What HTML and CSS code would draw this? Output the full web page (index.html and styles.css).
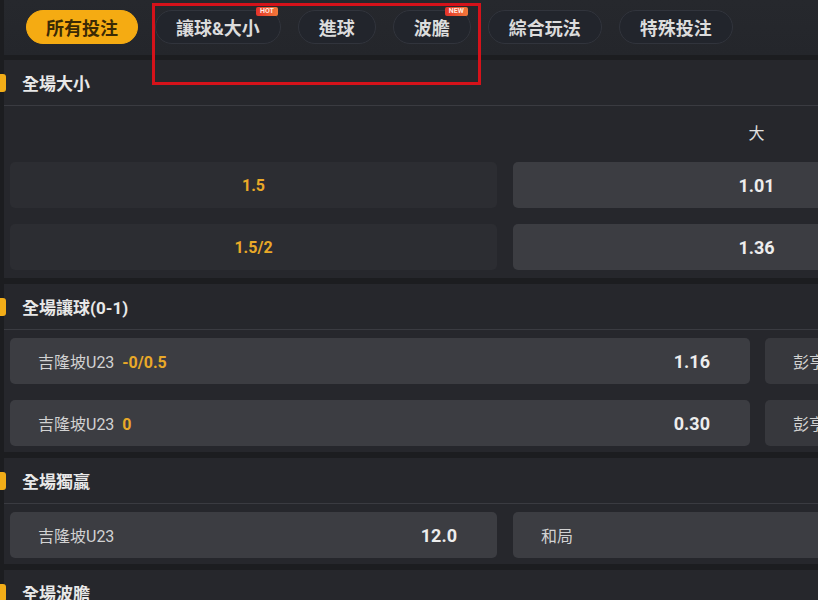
FILE: index.html
```html
<!DOCTYPE html>
<html lang="zh-Hant">
<head>
<meta charset="utf-8">
<title>投注</title>
<link rel="stylesheet" href="styles.css">
</head>
<body>
<div class="page">
  <nav class="tabbar">
    <span class="tab tab-active">所有投注</span>
    <span class="tab">讓球&amp;大小<span class="badge">HOT</span></span>
    <span class="tab">進球</span>
    <span class="tab">波膽<span class="badge">NEW</span></span>
    <span class="tab">綜合玩法</span>
    <span class="tab">特殊投注</span>
  </nav>

  <section class="market">
    <header class="market-head">全場大小</header>
    <div class="market-body market-body-ou">
      <div class="grid2 label-row">
        <span></span>
        <span class="col-label">大</span>
      </div>
      <div class="grid2">
        <div class="cell cell-line"><span class="hl">1.5</span></div>
        <div class="cell cell-odd center"><span class="odd">1.01</span></div>
      </div>
      <div class="grid2">
        <div class="cell cell-line"><span class="hl">1.5/2</span></div>
        <div class="cell cell-odd center"><span class="odd">1.36</span></div>
      </div>
    </div>
  </section>

  <section class="market">
    <header class="market-head">全場讓球(0-1)</header>
    <div class="market-body">
      <div class="grid-hc">
        <div class="cell cell-odd split"><span class="team">吉隆坡U23&nbsp; <span class="hl">-0/0.5</span></span><span class="odd">1.16</span></div>
        <div class="cell cell-odd2 split"><span class="team">彭亨</span></div>
      </div>
      <div class="grid-hc">
        <div class="cell cell-odd split"><span class="team">吉隆坡U23&nbsp; <span class="hl">0</span></span><span class="odd">0.30</span></div>
        <div class="cell cell-odd2 split"><span class="team">彭亨</span></div>
      </div>
    </div>
  </section>

  <section class="market">
    <header class="market-head">全場獨贏</header>
    <div class="market-body">
      <div class="grid2">
        <div class="cell cell-odd split"><span class="team">吉隆坡U23</span><span class="odd">12.0</span></div>
        <div class="cell cell-odd split"><span class="team">和局</span></div>
      </div>
    </div>
  </section>

  <section class="market">
    <header class="market-head">全場波膽</header>
  </section>
</div>
<div class="annot"></div>
</body>
</html>
```
FILE: styles.css
```css
html, body {
  margin: 0;
  padding: 0;
  overflow: hidden;
  background: #1c1d20;
  font-family: "Roboto", "Noto Sans CJK TC", sans-serif;
  color: #e6e6e6;
}

.page {
  width: 1000px;
  padding-left: 4px;
  display: flex;
  flex-direction: column;
  gap: 6px;
}

.tabbar {
  height: 55px;
  box-sizing: border-box;
  background: linear-gradient(#26282d, #24262b);
  display: flex;
  align-items: flex-start;
  gap: 17px;
  padding: 10px 0 0 22px;
  margin-bottom: -1px;
}

.tab {
  position: relative;
  height: 34px;
  box-sizing: border-box;
  padding: 0 20px;
  border-radius: 17px;
  background: #22252c;
  border: 1px solid #31343c;
  display: flex;
  align-items: center;
  font-size: 18px;
  font-weight: 700;
  color: #dcdcdc;
  white-space: nowrap;
}

.tab-active {
  padding: 0 19px;
  background: #f5ab12;
  border-color: #f5ab12;
  color: #3b2a05;
}

.badge {
  position: absolute;
  top: -4px;
  right: 2px;
  height: 9px;
  padding: 0 4px;
  border-radius: 2px;
  background: linear-gradient(90deg, #e5322a, #f27a3a);
  color: #ffe9e0;
  font-size: 7px;
  line-height: 9px;
  font-weight: 700;
}

.market {
  background: #26272c;
  position: relative;
}

.market-head {
  height: 45px;
  border-bottom: 1px solid #3a3b41;
  display: flex;
  align-items: center;
  padding-left: 18px;
  font-size: 17px;
  font-weight: 700;
  color: #e8e8e8;
  position: relative;
}

.market-head::before {
  content: "";
  position: absolute;
  left: -4px;
  top: 50%;
  width: 6px;
  height: 18px;
  margin-top: -9px;
  border-radius: 0 3px 3px 0;
  background: #f2ad18;
}

.market-body {
  padding: 8px 0 6px 6px;
  display: flex;
  flex-direction: column;
  gap: 16px;
}

.market-body-ou {
  padding-bottom: 8px;
}

.grid2 {
  display: grid;
  grid-template-columns: 487px 487px;
  column-gap: 16px;
}

.grid-hc {
  display: grid;
  grid-template-columns: 740px 300px;
  column-gap: 15px;
}

.label-row {
  height: 38px;
  align-items: center;
  margin-top: -1px;
  margin-bottom: -5px;
}

.col-label {
  text-align: center;
  font-size: 16px;
  color: #e0e0e0;
}

.cell {
  height: 46px;
  border-radius: 5px;
  display: flex;
  align-items: center;
  box-sizing: border-box;
}

.cell-line {
  background: #2c2d32;
  justify-content: center;
}

.cell-odd {
  background: #3c3d42;
}

.cell-odd2 {
  background: #37383d;
}

.center {
  justify-content: center;
}

.split {
  justify-content: space-between;
  padding: 0 40px 0 28px;
}

.hl {
  color: #e9a928;
  font-size: 16px;
  font-weight: 700;
}

.odd {
  color: #ededed;
  font-size: 18px;
  font-weight: 700;
}

.team {
  color: #d2d2d2;
  font-size: 16px;
}

.annot {
  position: absolute;
  left: 152px;
  top: 3px;
  width: 329px;
  height: 82px;
  box-sizing: border-box;
  border: 3px solid #d5121a;
}
```
